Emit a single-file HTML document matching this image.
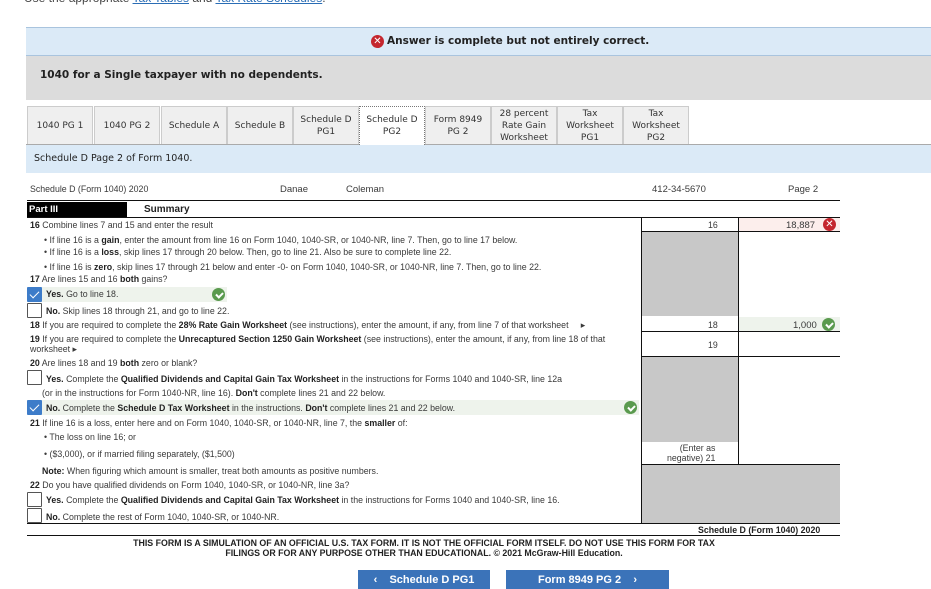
<!DOCTYPE html>
<html><head><meta charset="utf-8"><style>
*{margin:0;padding:0;box-sizing:border-box}
body{width:931px;height:589px;overflow:hidden;background:#fff;font-family:"Liberation Sans",Arial,sans-serif;position:relative;color:#222}
.a{position:absolute;white-space:nowrap}
.v{font-family:"DejaVu Sans",Verdana,sans-serif}
.tab{position:absolute;top:106px;height:38px;width:66px;background:#efefef;border:1px solid #ccc;border-bottom:none;font-family:"DejaVu Sans",Verdana,sans-serif;font-size:9px;color:#333;display:flex;align-items:center;justify-content:center;text-align:center;line-height:12px}
.f{font-size:8.8px;color:#3a3a3a}
.f b{color:#222}
.cb{position:absolute;width:15px;height:15px;border:1px solid #555;background:#fff;border-radius:1px}
.cb.on{background:#3d7cc9;border-color:#3d7cc9}
.cb.on:after{content:"";position:absolute;left:4px;top:1px;width:4px;height:8px;border:solid #fff;border-width:0 1.5px 1.5px 0;transform:rotate(45deg)}
.ok{position:absolute;width:13px;height:13px;border-radius:50%;background:#5a9a4e}
.ok:after{content:"";position:absolute;left:4.5px;top:2.5px;width:3px;height:5px;border:solid #fff;border-width:0 2px 2px 0;transform:rotate(45deg)}
.no{position:absolute;width:13px;height:13px;border-radius:50%;background:#c4262e;color:#fff;font:bold 10px/13px "DejaVu Sans",sans-serif;text-align:center}
.hl{position:absolute;height:1px;background:#111}
.vl{position:absolute;width:1px;background:#111}
.g{position:absolute;background:#c8c8c8}
.btn{position:absolute;top:570px;height:19px;background:#3b73b9;color:#fff;font-size:11px;font-weight:bold;display:flex;align-items:center;justify-content:center}
</style></head><body>
<div class="a" style="left:24px;top:-9px;font-size:12px;color:#444">Use the appropriate <span style="color:#2a6db5;text-decoration:underline">Tax Tables</span> and <span style="color:#2a6db5;text-decoration:underline">Tax Rate Schedules</span>.</div>
<div style="position:absolute;left:26px;top:27px;width:905px;height:29px;background:#dbeaf7;border-top:1px solid #a9c4de;border-bottom:1px solid #a9c4de"></div>
<div class="no" style="left:371px;top:35px">✕</div>
<div class="a v" style="left:387px;top:35px;font-size:10.5px;font-weight:bold;color:#222">Answer is complete but not entirely correct.</div>
<div style="position:absolute;left:26px;top:56px;width:905px;height:44px;background:#dcdcdc"></div>
<div class="a v" style="left:40px;top:69px;font-size:10.5px;font-weight:bold;color:#222">1040 for a Single taxpayer with no dependents.</div>
<div class="tab" style="left:27px">1040 PG 1</div>
<div class="tab" style="left:94px">1040 PG 2</div>
<div class="tab" style="left:161px">Schedule A</div>
<div class="tab" style="left:227px">Schedule B</div>
<div class="tab" style="left:293px">Schedule D<br>PG1</div>
<div class="tab" style="left:359px;background:#fff;border:1px dotted #777;border-bottom:none;height:39px;z-index:2">Schedule D<br>PG2</div>
<div class="tab" style="left:425px">Form 8949<br>PG 2</div>
<div class="tab" style="left:491px">28 percent<br>Rate Gain<br>Worksheet</div>
<div class="tab" style="left:557px">Tax<br>Worksheet<br>PG1</div>
<div class="tab" style="left:623px">Tax<br>Worksheet<br>PG2</div>
<div style="position:absolute;left:26px;top:144px;width:905px;height:29px;background:#dbeaf7;border-top:1px solid #aaa"></div>
<div class="a v" style="left:34px;top:153px;font-size:9.5px;color:#222">Schedule D Page 2 of Form 1040.</div>

<div class="a f" style="left:30px;top:184px">Schedule D (Form 1040) 2020</div>
<div class="a f" style="left:280px;top:184px;font-size:9.5px">Danae</div>
<div class="a f" style="left:346px;top:184px;font-size:9.5px">Coleman</div>
<div class="a f" style="left:652px;top:184px;font-size:9.5px">412-34-5670</div>
<div class="a f" style="left:788px;top:184px;font-size:9.5px">Page 2</div>
<div class="hl" style="left:27px;top:200px;width:813px"></div>
<div style="position:absolute;left:27px;top:202px;width:100px;height:15px;background:#000"></div>
<div class="a" style="left:29px;top:204px;font-size:9.5px;font-weight:bold;color:#fff">Part III</div>
<div class="a" style="left:144px;top:204px;font-size:10px;font-weight:bold;color:#222">Summary</div>
<div class="hl" style="left:27px;top:217px;width:813px"></div>

<div style="position:absolute;left:738px;top:218px;width:102px;height:13px;background:#fceeec"></div>
<div style="position:absolute;left:738px;top:317px;width:102px;height:14px;background:#eef3ec"></div>
<div class="g" style="left:641px;top:231px;width:97px;height:85px"></div>
<div class="g" style="left:641px;top:356px;width:97px;height:86px"></div>
<div class="g" style="left:641px;top:464px;width:199px;height:59px"></div>
<div class="vl" style="left:641px;top:217px;height:306px"></div>
<div class="vl" style="left:738px;top:217px;height:247px"></div>
<div class="hl" style="left:641px;top:231px;width:199px"></div>
<div class="hl" style="left:641px;top:331px;width:199px"></div>
<div class="hl" style="left:641px;top:356px;width:199px"></div>
<div class="hl" style="left:641px;top:464px;width:199px"></div>
<div class="a f" style="left:708px;top:220px">16</div>
<div class="a f" style="left:786px;top:220px;font-size:9.5px">18,887</div>
<div class="no" style="left:823px;top:218px">✕</div>
<div class="a f" style="left:708px;top:320px">18</div>
<div class="a f" style="left:793px;top:320px;font-size:9.5px">1,000</div>
<div class="ok" style="left:822px;top:318px"></div>
<div class="a f" style="left:708px;top:340px">19</div>
<div class="a f" style="left:667px;top:444px;text-align:right;line-height:9.5px">&nbsp;&nbsp;&nbsp;(Enter as<br>negative) 21</div>
<div class="hl" style="left:27px;top:523px;width:813px"></div>
<div class="a f" style="left:698px;top:525px;font-weight:bold;color:#222">Schedule D (Form 1040) 2020</div>
<div class="hl" style="left:27px;top:535px;width:813px"></div>

<div class="a f" style="left:30px;top:220px"><b>16</b> Combine lines 7 and 15 and enter the result</div>
<div class="a f" style="left:44px;top:235px">• If line 16 is a <b>gain</b>, enter the amount from line 16 on Form 1040, 1040-SR, or 1040-NR, line 7. Then, go to line 17 below.</div>
<div class="a f" style="left:44px;top:247px">• If line 16 is a <b>loss</b>, skip lines 17 through 20 below. Then, go to line 21. Also be sure to complete line 22.</div>
<div class="a f" style="left:44px;top:262px">• If line 16 is <b>zero</b>, skip lines 17 through 21 below and enter -0- on Form 1040, 1040-SR, or 1040-NR, line 7. Then, go to line 22.</div>
<div class="a f" style="left:30px;top:274px"><b>17</b> Are lines 15 and 16 <b>both</b> gains?</div>
<div style="position:absolute;left:27px;top:287px;width:200px;height:15px;background:#eef3ec"></div>
<div class="cb on" style="left:27px;top:287px"></div>
<div class="a f" style="left:46px;top:289px"><b>Yes.</b> Go to line 18.</div>
<div class="ok" style="left:212px;top:288px"></div>
<div class="cb" style="left:27px;top:303px"></div>
<div class="a f" style="left:46px;top:306px"><b>No.</b> Skip lines 18 through 21, and go to line 22.</div>
<div class="a f" style="left:30px;top:320px"><b>18</b> If you are required to complete the <b>28% Rate Gain Worksheet</b> (see instructions), enter the amount, if any, from line 7 of that worksheet &nbsp;&nbsp;&nbsp;&nbsp;▸</div>
<div class="a f" style="left:30px;top:334px"><b>19</b> If you are required to complete the <b>Unrecaptured Section 1250 Gain Worksheet</b> (see instructions), enter the amount, if any, from line 18 of that</div>
<div class="a f" style="left:30px;top:344px">worksheet ▸</div>
<div class="a f" style="left:30px;top:358px"><b>20</b> Are lines 18 and 19 <b>both</b> zero or blank?</div>
<div class="cb" style="left:27px;top:370px"></div>
<div class="a f" style="left:46px;top:374px"><b>Yes.</b> Complete the <b>Qualified Dividends and Capital Gain Tax Worksheet</b> in the instructions for Forms 1040 and 1040-SR, line 12a</div>
<div class="a f" style="left:42px;top:388px">(or in the instructions for Form 1040-NR, line 16). <b>Don't</b> complete lines 21 and 22 below.</div>
<div style="position:absolute;left:27px;top:400px;width:612px;height:15px;background:#eef3ec"></div>
<div class="cb on" style="left:27px;top:400px"></div>
<div class="a f" style="left:46px;top:403px"><b>No.</b> Complete the <b>Schedule D Tax Worksheet</b> in the instructions. <b>Don't</b> complete lines 21 and 22 below.</div>
<div class="ok" style="left:624px;top:401px"></div>
<div class="a f" style="left:30px;top:418px"><b>21</b> If line 16 is a loss, enter here and on Form 1040, 1040-SR, or 1040-NR, line 7, the <b>smaller</b> of:</div>
<div class="a f" style="left:44px;top:432px">• The loss on line 16; or</div>
<div class="a f" style="left:44px;top:449px">• ($3,000), or if married filing separately, ($1,500)</div>
<div class="a f" style="left:42px;top:466px"><b>Note:</b> When figuring which amount is smaller, treat both amounts as positive numbers.</div>
<div class="a f" style="left:30px;top:480px"><b>22</b> Do you have qualified dividends on Form 1040, 1040-SR, or 1040-NR, line 3a?</div>
<div class="cb" style="left:27px;top:492px"></div>
<div class="a f" style="left:46px;top:495px"><b>Yes.</b> Complete the <b>Qualified Dividends and Capital Gain Tax Worksheet</b> in the instructions for Forms 1040 and 1040-SR, line 16.</div>
<div class="cb" style="left:27px;top:508px"></div>
<div class="a f" style="left:46px;top:512px"><b>No.</b> Complete the rest of Form 1040, 1040-SR, or 1040-NR.</div>

<div class="a" style="left:0;width:848px;top:538px;text-align:center;font-size:8.8px;font-weight:bold;color:#222;line-height:10px;white-space:normal">THIS FORM IS A SIMULATION OF AN OFFICIAL U.S. TAX FORM. IT IS NOT THE OFFICIAL FORM ITSELF. DO NOT USE THIS FORM FOR TAX<br>FILINGS OR FOR ANY PURPOSE OTHER THAN EDUCATIONAL. © 2021 McGraw-Hill Education.</div>
<div class="btn" style="left:358px;width:132px">‹&nbsp;&nbsp;&nbsp;&nbsp;Schedule D PG1</div>
<div class="btn" style="left:506px;width:163px">Form 8949 PG 2&nbsp;&nbsp;&nbsp;&nbsp;›</div>
</body></html>
